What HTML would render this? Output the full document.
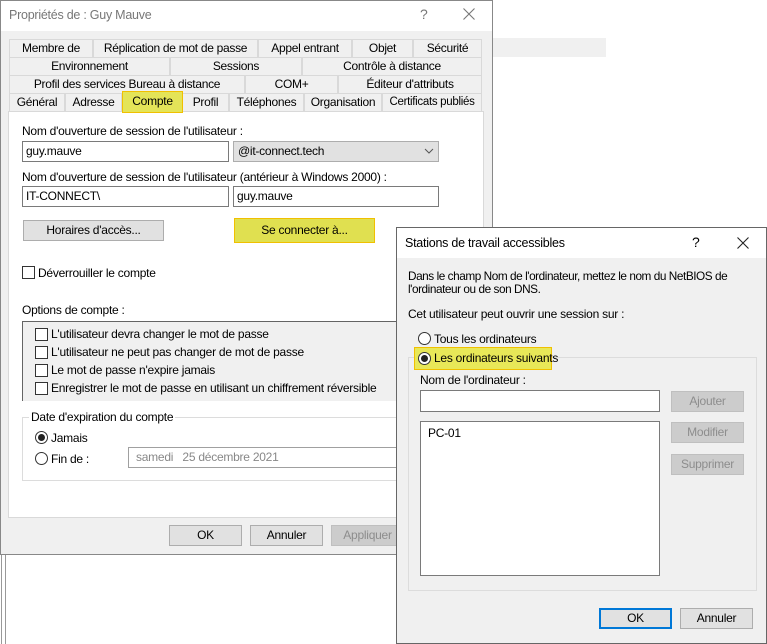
<!DOCTYPE html>
<html><head><meta charset="utf-8"><style>
*{box-sizing:border-box;margin:0;padding:0}
body{width:767px;height:644px;background:#fff;position:relative;overflow:hidden;font-family:"Liberation Sans",sans-serif;font-size:12px;letter-spacing:-0.25px;color:#000}
.a{position:absolute}
.t{position:absolute;white-space:nowrap;line-height:14px}
.tab{position:absolute;height:18px;border:1px solid #d9d9d9;border-bottom:none;background:#f0f0f0;text-align:center;line-height:17px;font-size:12px;white-space:nowrap;letter-spacing:-0.3px}
.in{position:absolute;background:#fff;border:1px solid #7a7a7a;padding-left:3px;line-height:18px}
.btn{position:absolute;background:#e1e1e1;border:1px solid #adadad;text-align:center;line-height:18px}
.dis{color:#8d8d8d;background:#cccccc;border-color:#bfbfbf}
.cb{position:absolute;width:13px;height:13px;border:1px solid #333;background:#fff}
.rb{position:absolute;width:13px;height:13px;border:1px solid #333;border-radius:50%;background:#fff}
.rb.on::after{content:"";position:absolute;left:2px;top:2px;width:7px;height:7px;border-radius:50%;background:#222}
</style></head><body>
<div class="a" style="left:1px;top:554px;width:1px;height:90px;background:#999"></div>
<div class="a" style="left:5px;top:554px;width:1px;height:90px;background:#999"></div>
<div class="a" style="left:492px;top:38px;width:114px;height:19px;background:#f0f0f0"></div>

<div class="a" style="left:0;top:0;width:493px;height:555px;background:#f0f0f0;border:1px solid #888"></div>
<div class="a" style="left:1px;top:1px;width:491px;height:30px;background:#fff"></div>
<div class="t" style="left:9px;top:8px;font-size:12.5px;color:#777">Propriétés de : Guy Mauve</div>
<div class="t" style="left:420px;top:7px;font-size:14px;color:#777">?</div>
<svg class="a" style="left:463px;top:8px" width="12" height="12"><path d="M0.5 0.5 L11.5 11.5 M11.5 0.5 L0.5 11.5" stroke="#777" stroke-width="1.1"/></svg>

<div class="tab" style="left:9px;top:39px;width:84px">Membre de</div>
<div class="tab" style="left:93px;top:39px;width:165px">Réplication de mot de passe</div>
<div class="tab" style="left:258px;top:39px;width:94px">Appel entrant</div>
<div class="tab" style="left:352px;top:39px;width:61px">Objet</div>
<div class="tab" style="left:413px;top:39px;width:69px">Sécurité</div>
<div class="tab" style="left:9px;top:57px;width:161px">Environnement</div>
<div class="tab" style="left:170px;top:57px;width:132px">Sessions</div>
<div class="tab" style="left:302px;top:57px;width:180px">Contrôle à distance</div>
<div class="tab" style="left:9px;top:75px;width:236px">Profil des services Bureau à distance</div>
<div class="tab" style="left:245px;top:75px;width:93px">COM+</div>
<div class="tab" style="left:338px;top:75px;width:144px">Éditeur d'attributs</div>
<div class="tab" style="left:9px;top:93px;width:56px">Général</div>
<div class="tab" style="left:65px;top:93px;width:57px">Adresse</div>
<div class="tab" style="left:182px;top:93px;width:47px">Profil</div>
<div class="tab" style="left:229px;top:93px;width:75px">Téléphones</div>
<div class="tab" style="left:304px;top:93px;width:78px">Organisation</div>
<div class="tab" style="left:382px;top:93px;width:100px;font-size:11.5px">Certificats publiés</div>

<div class="a" style="left:8px;top:111px;width:476px;height:407px;background:#fff;border:1px solid #d9d9d9"></div>
<div class="a" style="left:122px;top:91px;width:61px;height:22px;background:#e4e458;border:1px solid #f0c000;text-align:center;line-height:19px">Compte</div>

<div class="t" style="left:22px;top:124px">Nom d'ouverture de session de l'utilisateur :</div>
<div class="in" style="left:22px;top:141px;width:207px;height:21px">guy.mauve</div>
<div class="a" style="left:233px;top:141px;width:206px;height:21px;background:#e1e1e1;border:1px solid #adadad;padding-left:4px;line-height:19px">@it-connect.tech</div>
<svg class="a" style="left:424px;top:147px" width="10" height="8"><path d="M1 2 L5 6 L9 2" fill="none" stroke="#555" stroke-width="1"/></svg>
<div class="t" style="left:22px;top:170px">Nom d'ouverture de session de l'utilisateur (antérieur à Windows 2000) :</div>
<div class="in" style="left:22px;top:186px;width:207px;height:21px">IT-CONNECT\</div>
<div class="in" style="left:233px;top:186px;width:206px;height:21px">guy.mauve</div>
<div class="btn" style="left:23px;top:220px;width:141px;height:21px">Horaires d'accès...</div>
<div class="btn" style="left:234px;top:218px;width:141px;height:25px;background:#e0e050;border:1px solid #f0c000;line-height:22px">Se connecter à...</div>

<div class="cb" style="left:22px;top:266px"></div>
<div class="t" style="left:38px;top:266px">Déverrouiller le compte</div>
<div class="t" style="left:22px;top:303px">Options de compte :</div>
<div class="a" style="left:22px;top:321px;width:380px;height:80px;background:#f0f0f0;border-top:1px solid #646464;border-left:1px solid #646464"></div>
<div class="cb" style="left:35px;top:328px"></div><div class="t" style="left:51px;top:327px">L'utilisateur devra changer le mot de passe</div>
<div class="cb" style="left:35px;top:346px"></div><div class="t" style="left:51px;top:345px">L'utilisateur ne peut pas changer de mot de passe</div>
<div class="cb" style="left:35px;top:364px"></div><div class="t" style="left:51px;top:363px">Le mot de passe n'expire jamais</div>
<div class="cb" style="left:35px;top:382px"></div><div class="t" style="left:51px;top:381px">Enregistrer le mot de passe en utilisant un chiffrement réversible</div>

<div class="a" style="left:22px;top:417px;width:380px;height:64px;border:1px solid #dcdcdc"></div>
<div class="t" style="left:29px;top:410px;background:#fff;padding:0 2px">Date d'expiration du compte</div>
<div class="rb on" style="left:35px;top:431px"></div><div class="t" style="left:51px;top:431px">Jamais</div>
<div class="rb" style="left:35px;top:452px"></div><div class="t" style="left:51px;top:452px">Fin de :</div>
<div class="a" style="left:128px;top:447px;width:270px;height:21px;border:1px solid #a0a0a0;background:#fff;color:#888;padding-left:7px;line-height:19px">samedi &nbsp; 25 décembre 2021</div>

<div class="btn" style="left:169px;top:525px;width:73px;height:21px">OK</div>
<div class="btn" style="left:250px;top:525px;width:73px;height:21px">Annuler</div>
<div class="btn dis" style="left:331px;top:525px;width:73px;height:21px">Appliquer</div>

<div class="a" style="left:396px;top:227px;width:371px;height:417px;background:#f0f0f0;border:1px solid #666"></div>
<div class="a" style="left:397px;top:228px;width:369px;height:30px;background:#fff"></div>
<div class="t" style="left:405px;top:236px;font-size:12.5px">Stations de travail accessibles</div>
<div class="t" style="left:692px;top:235px;font-size:14px">?</div>
<svg class="a" style="left:737px;top:237px" width="12" height="12"><path d="M0.5 0.5 L11.5 11.5 M11.5 0.5 L0.5 11.5" stroke="#222" stroke-width="1.1"/></svg>
<div class="t" style="left:408px;top:269px;letter-spacing:-0.45px;font-size:11.8px">Dans le champ Nom de l'ordinateur, mettez le nom du NetBIOS de</div>
<div class="t" style="left:408px;top:282px;letter-spacing:-0.45px;font-size:11.8px">l'ordinateur ou de son DNS.</div>
<div class="t" style="left:408px;top:307px">Cet utilisateur peut ouvrir une session sur :</div>
<div class="rb" style="left:418px;top:332px"></div><div class="t" style="left:434px;top:332px">Tous les ordinateurs</div>
<div class="a" style="left:408px;top:357px;width:349px;height:234px;border:1px solid #dcdcdc"></div>
<div class="a" style="left:414px;top:347px;width:138px;height:23px;background:#e8e858;border:1px solid #f0c000"></div>
<div class="rb on" style="left:418px;top:352px"></div><div class="t" style="left:434px;top:351px">Les ordinateurs suivants</div>
<div class="t" style="left:420px;top:373px">Nom de l'ordinateur :</div>
<div class="in" style="left:420px;top:390px;width:240px;height:22px"></div>
<div class="in" style="left:420px;top:421px;width:240px;height:155px;padding-left:7px;line-height:22px">PC-01</div>
<div class="btn dis" style="left:671px;top:391px;width:73px;height:21px">Ajouter</div>
<div class="btn dis" style="left:671px;top:422px;width:73px;height:21px">Modifier</div>
<div class="btn dis" style="left:671px;top:454px;width:73px;height:21px">Supprimer</div>
<div class="btn" style="left:599px;top:608px;width:73px;height:21px;border:2px solid #0078d7;line-height:17px">OK</div>
<div class="btn" style="left:680px;top:608px;width:73px;height:21px">Annuler</div>
</body></html>
